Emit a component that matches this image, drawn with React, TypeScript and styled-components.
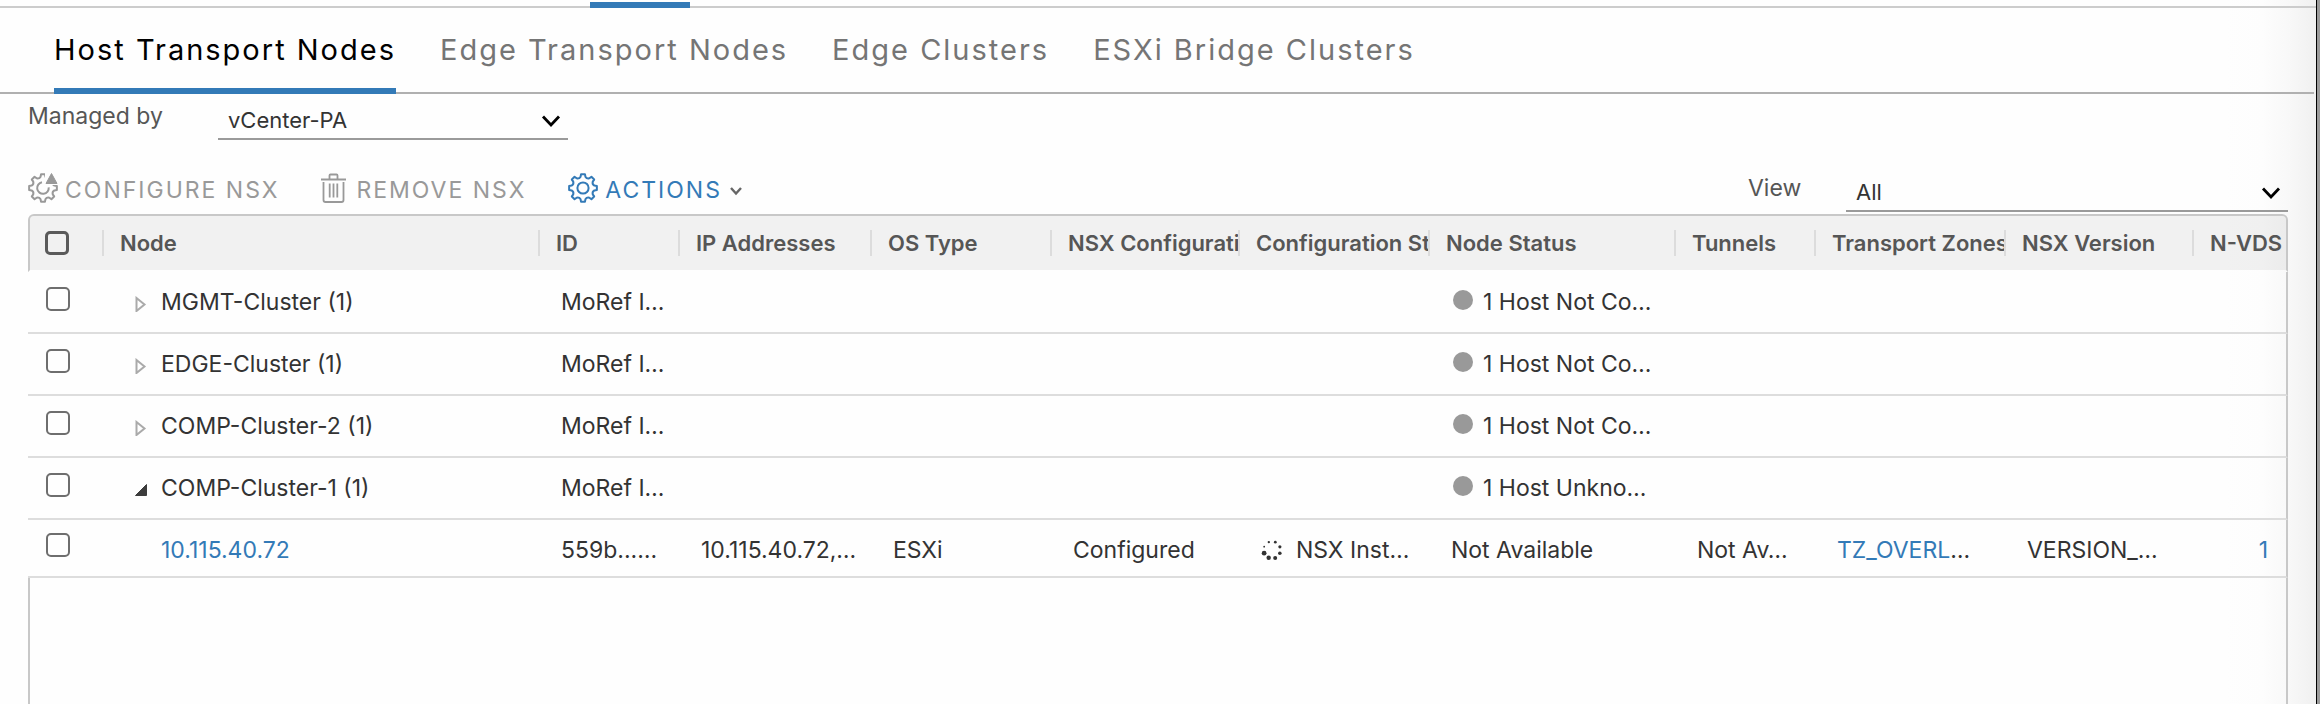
import React from "react";
import styled, { createGlobalStyle } from "styled-components";

const GlobalStyle = createGlobalStyle`
  * { box-sizing: border-box; }
  body { margin: 0; background: #fefefe; }
  body, button, select, input, table {
    font-family: Inter, "Liberation Sans", sans-serif;
    font-size: 23px;
    line-height: 28px;
    color: #333;
  }
`;

const Page = styled.div`
  display: flex;
  min-height: 100vh;
`;

const Content = styled.main`
  flex: 1;
  min-width: 0;
  display: flex;
  flex-direction: column;
  background: linear-gradient(to left, #f0f0f0 0, #f8f8f8 26px, #fdfdfd 54px, #fefefe 90px);
`;

const WindowEdge = styled.div`
  width: 4px;
  border-left: 1px solid #000;
  background: #9b9b9b;
`;

const ParentTabs = styled.div`
  height: 8px;
  padding: 2px 0 0 590px;
  border-bottom: 2px solid #ccc;
`;

const ParentIndicator = styled.div`
  width: 100px;
  height: 6px;
  background: #337ab7;
`;

const Tabs = styled.nav`
  display: flex;
  gap: 44px;
  height: 86px;
  padding-left: 54px;
  margin-right: 2px;
  border-bottom: 2px solid #b0b0b0;
`;

const Tab = styled.button<{ $active?: boolean }>`
  height: 86px;
  padding: 4px 0 0;
  border: 0;
  border-bottom: 6px solid ${(p) => (p.$active ? "#337ab7" : "transparent")};
  background: none;
  font-size: 29px;
  letter-spacing: 2px;
  color: ${(p) => (p.$active ? "#000" : "#757575")};
`;

const FilterBar = styled.div`
  display: flex;
  align-items: flex-end;
  height: 46px;
  padding: 0 28px;
`;

const FieldLabel = styled.label<{ $width: number }>`
  width: ${(p) => p.$width}px;
  padding-bottom: 10px;
  color: #565656;
`;

const SelectBox = styled.div<{ $width: number }>`
  position: relative;
  width: ${(p) => p.$width}px;
  height: 38px;
  border-bottom: 2px solid #9a9a9a;
`;

const Select = styled.select`
  appearance: none;
  width: 100%;
  height: 36px;
  padding: 0 40px 0 10px;
  border: 0;
  background: none;
  font-size: 22px;
`;

const SelectArrow = styled.svg`
  position: absolute;
  right: 7px;
  top: 12px;
  pointer-events: none;
`;

const Toolbar = styled.div`
  display: flex;
  align-items: flex-end;
  height: 72px;
  padding: 0 28px;
`;

const ToolButton = styled.button<{ $primary?: boolean }>`
  display: flex;
  align-items: center;
  height: 32px;
  margin: 0 42px 8px 0;
  padding: 0;
  border: 0;
  background: none;
  letter-spacing: 2px;
  color: ${(p) => (p.$primary ? "#337ab7" : "#999")};
  svg { flex: none; }
  span { margin: 4px 0 0 6px; }
`;

const ActionsCaret = styled.svg`
  margin: 6px 0 0 7px;
`;

const Spacer = styled.div`
  flex: 1;
`;

const Grid = styled.section`
  flex: 1;
  display: flex;
  flex-direction: column;
  margin: 2px 28px 0;
`;

const Table = styled.table`
  width: 100%;
  table-layout: fixed;
  border-collapse: separate;
  border-spacing: 0;
`;

const HeaderTh = styled.th`
  height: 58px;
  padding: 0;
  border-top: 2px solid #c8c8c8;
  border-bottom: 2px solid transparent;
  background: rgba(0, 0, 0, 0.05);
  background-clip: padding-box;
  text-align: left;
  &:first-child { border-left: 2px solid #c8c8c8; border-top-left-radius: 6px; padding-left: 15px; }
  &:last-child { border-right: 2px solid #c8c8c8; border-top-right-radius: 6px; }
`;

const HeaderText = styled.div`
  height: 26px;
  padding-left: 16px;
  border-left: 2px solid #dcdcdc;
  overflow: hidden;
  white-space: nowrap;
  font-size: 22px;
  line-height: 26px;
  font-weight: 600;
  color: #565656;
`;

const BodyCell = styled.td<{ $height: number; $align?: string }>`
  height: ${(p) => p.$height}px;
  padding: 16px 0 0 23px;
  border-bottom: 2px solid #ddd;
  vertical-align: top;
  text-align: ${(p) => p.$align || "left"};
  white-space: nowrap;
  &:first-child { padding: ${(p) => p.$height / 2 - 16}px 0 0 18px; }
  &:last-child { border-right: 2px solid #c8c8c8; padding-right: 18px; padding-left: 0; }
`;

const Checkbox = styled.input<{ $strong?: boolean }>`
  appearance: none;
  display: block;
  width: 24px;
  height: 24px;
  margin: 0;
  border: ${(p) => (p.$strong ? "3px solid #5a5a5a" : "2px solid #6e6e6e")};
  border-radius: 5px;
  background: transparent;
`;

const CellLine = styled.div<{ $indent?: number; $gap?: number }>`
  display: flex;
  align-items: center;
  gap: ${(p) => p.$gap || 0}px;
  padding-left: ${(p) => p.$indent || 0}px;
`;

const Expander = styled.button`
  display: flex;
  padding: 4px 0 0;
  border: 0;
  background: none;
`;

const StatusDot = styled.span`
  width: 20px;
  height: 20px;
  margin-bottom: 4px;
  border-radius: 50%;
  background: #999;
`;

const Link = styled.a`
  color: #337ab7;
  text-decoration: none;
`;

const EmptyArea = styled.div`
  flex: 1;
  border: solid #c8c8c8;
  border-width: 0 2px;
`;

// Eight rounded teeth around the centre (15,15).
const gearOutline = (() => {
  const parts: string[] = [];
  const at = (r: number, deg: number) => {
    const a = (deg * Math.PI) / 180;
    return `${(15 + r * Math.sin(a)).toFixed(2)} ${(15 - r * Math.cos(a)).toFixed(2)}`;
  };
  for (let i = 0; i < 8; i++) {
    const d = i * 45;
    parts.push(
      `${i ? "L" : "M"}${at(14, d - 8)}L${at(14, d + 8)}L${at(11.6, d + 12)}Q${at(9.8, d + 22.5)} ${at(11.6, d + 33)}`
    );
  }
  return parts.join("") + "Z";
})();

const Gear = ({ badge }: { badge?: boolean }) => (
  <svg width="31" height="32" viewBox="0 0 31 32" fill="none" stroke="currentColor" strokeWidth="2" strokeLinejoin="round">
    <g transform="translate(0 1)">
      {badge ? (
        <>
          <clipPath id="gear-cut">
            <path d="M0 0H17V12H31V31H0Z" />
          </clipPath>
          <path d={gearOutline} clipPath="url(#gear-cut)" />
          <path d="M14 9.300a5.800 5.800 0 1 0 6.700 5" />
          <path d="M23.500 0.500L29 10.500H18Z" fill="currentColor" stroke="currentColor" strokeWidth="1" />
        </>
      ) : (
        <>
          <path d={gearOutline} />
          <circle cx="15" cy="15" r="5.600" />
        </>
      )}
    </g>
  </svg>
);

const Trash = () => (
  <svg width="29" height="32" viewBox="0 0 29 32" fill="none" stroke="currentColor" strokeWidth="1.8">
    <path d="M0 7.500H25M8.500 7V3.500Q8.500 2.500 9.500 2.500H15.500Q16.500 2.500 16.500 3.500V7M2.500 10V28Q2.500 30 4.500 30H20.500Q22.500 30 22.500 28V10M8.700 11.500V25.500M12.500 11.500V25.500M16.300 11.500V25.500" />
  </svg>
);

const Spinner = () => (
  <svg width="22" height="22" viewBox="0 0 22 22" fill="#333">
    {[1.2, 1.4, 1.6, 1.8, 2, 2.2, 2.4, 0.9].map((r, i) => {
      const a = ((i * 45 - 22) * Math.PI) / 180;
      return <circle key={i} cx={11 + 8.5 * Math.sin(a)} cy={11 - 8.5 * Math.cos(a)} r={r} />;
    })}
  </svg>
);

const ExpandIcon = ({ open }: { open?: boolean }) => (
  <svg width="12" height="16" viewBox="0 0 12 16">
    {open ? (
      <path d="M11.500 2.500V13.500H0.500Z" fill="#3c3c3c" stroke="#3c3c3c" strokeLinejoin="round" />
    ) : (
      <path d="M1.500 2L9.500 8.500L1.500 15Z" fill="none" stroke="#aaa" strokeWidth="2" />
    )}
  </svg>
);

const Dropdown = ({ id, value, width }: { id: string; value: string; width: number }) => (
  <SelectBox $width={width}>
    <Select id={id} defaultValue={value}>
      <option>{value}</option>
    </Select>
    <SelectArrow width="20" height="14" viewBox="0 0 20 14" fill="none" stroke="#000" strokeWidth="2.800">
      <path d="M2 2.500L10 11L18 2.500" />
    </SelectArrow>
  </SelectBox>
);

const columns: { title: string; width?: number }[] = [
  { title: "Node" },
  { title: "ID", width: 140 },
  { title: "IP Addresses", width: 192 },
  { title: "OS Type", width: 180 },
  { title: "NSX Configuration", width: 188 },
  { title: "Configuration State", width: 190 },
  { title: "Node Status", width: 246 },
  { title: "Tunnels", width: 140 },
  { title: "Transport Zones", width: 190 },
  { title: "NSX Version", width: 188 },
  { title: "N-VDS", width: 96 },
];

const clusters = [
  { name: "MGMT-Cluster (1)", status: "1 Host Not Co…" },
  { name: "EDGE-Cluster (1)", status: "1 Host Not Co…" },
  { name: "COMP-Cluster-2 (1)", status: "1 Host Not Co…" },
  { name: "COMP-Cluster-1 (1)", status: "1 Host Unkno…", open: true },
];

export default function App() {
  return (
    <Page>
      <GlobalStyle />
      <Content>
        <ParentTabs>
          <ParentIndicator />
        </ParentTabs>
        <Tabs>
          <Tab $active>Host Transport Nodes</Tab>
          <Tab>Edge Transport Nodes</Tab>
          <Tab>Edge Clusters</Tab>
          <Tab>ESXi Bridge Clusters</Tab>
        </Tabs>
        <FilterBar>
          <FieldLabel htmlFor="managed-by" $width={190}>Managed by</FieldLabel>
          <Dropdown id="managed-by" value="vCenter-PA" width={350} />
        </FilterBar>
        <Toolbar>
          <ToolButton disabled>
            <Gear badge />
            <span>CONFIGURE NSX</span>
          </ToolButton>
          <ToolButton disabled>
            <Trash />
            <span>REMOVE NSX</span>
          </ToolButton>
          <ToolButton $primary>
            <Gear />
            <span>ACTIONS</span>
            <ActionsCaret width="14" height="10" viewBox="0 0 14 10" fill="none" stroke="#666" strokeWidth="2.400">
              <path d="M2 2L7 7.500L12 2" />
            </ActionsCaret>
          </ToolButton>
          <Spacer />
          <FieldLabel htmlFor="view" $width={98}>View</FieldLabel>
          <Dropdown id="view" value="All" width={442} />
        </Toolbar>
        <Grid>
          <Table>
            <colgroup>
              <col width={74} />
              {columns.map((c) => (
                <col key={c.title} width={c.width} />
              ))}
            </colgroup>
            <thead>
              <tr>
                <HeaderTh>
                  <Checkbox type="checkbox" $strong aria-label="Select all nodes" />
                </HeaderTh>
                {columns.map((c) => (
                  <HeaderTh key={c.title}>
                    <HeaderText>{c.title}</HeaderText>
                  </HeaderTh>
                ))}
              </tr>
            </thead>
            <tbody>
              {clusters.map((c) => (
                <tr key={c.name}>
                  <BodyCell $height={62}>
                    <Checkbox type="checkbox" aria-label={c.name} />
                  </BodyCell>
                  <BodyCell $height={62}>
                    <CellLine $indent={10} $gap={14}>
                      <Expander aria-label="Toggle cluster" aria-expanded={!!c.open}>
                        <ExpandIcon open={c.open} />
                      </Expander>
                      {c.name}
                    </CellLine>
                  </BodyCell>
                  <BodyCell $height={62}>MoRef I…</BodyCell>
                  <BodyCell $height={62} />
                  <BodyCell $height={62} />
                  <BodyCell $height={62} />
                  <BodyCell $height={62} />
                  <BodyCell $height={62}>
                    <CellLine $indent={2} $gap={10}>
                      <StatusDot />
                      {c.status}
                    </CellLine>
                  </BodyCell>
                  <BodyCell $height={62} />
                  <BodyCell $height={62} />
                  <BodyCell $height={62} />
                  <BodyCell $height={62} />
                </tr>
              ))}
              <tr>
                <BodyCell $height={58}>
                  <Checkbox type="checkbox" aria-label="10.115.40.72" />
                </BodyCell>
                <BodyCell $height={58}>
                  <CellLine $indent={36}>
                    <Link href="#host">10.115.40.72</Link>
                  </CellLine>
                </BodyCell>
                <BodyCell $height={58}>559b...…</BodyCell>
                <BodyCell $height={58}>10.115.40.72,…</BodyCell>
                <BodyCell $height={58}>ESXi</BodyCell>
                <BodyCell $height={58}>Configured</BodyCell>
                <BodyCell $height={58}>
                  <CellLine $gap={13}>
                    <Spinner />
                    NSX Inst…
                  </CellLine>
                </BodyCell>
                <BodyCell $height={58}>Not Available</BodyCell>
                <BodyCell $height={58}>Not Av…</BodyCell>
                <BodyCell $height={58}>
                  <Link href="#zone">TZ_OVERL</Link>…
                </BodyCell>
                <BodyCell $height={58}>VERSION_…</BodyCell>
                <BodyCell $height={58} $align="right">
                  <Link href="#nvds">1</Link>
                </BodyCell>
              </tr>
            </tbody>
          </Table>
          <EmptyArea />
        </Grid>
      </Content>
      <WindowEdge />
    </Page>
  );
}
